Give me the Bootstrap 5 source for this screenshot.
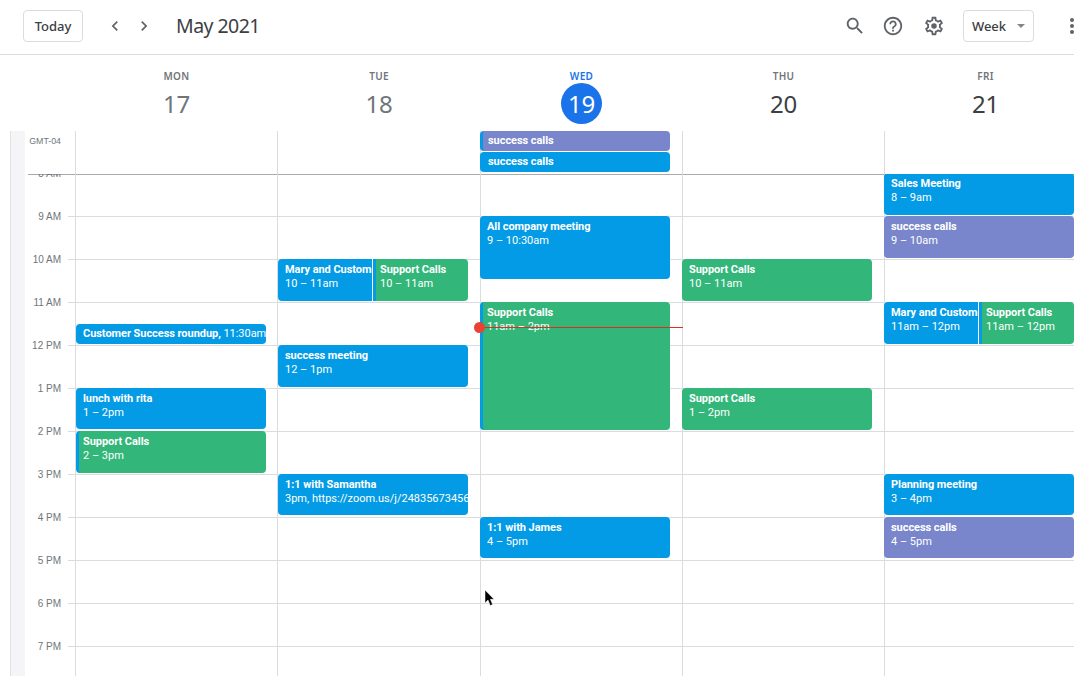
<!DOCTYPE html>
<html lang="en">
<head>
<meta charset="utf-8">
<title>Calendar – May 2021</title>
<link rel="stylesheet" href="https://cdn.jsdelivr.net/npm/bootstrap@5.3.0/dist/css/bootstrap.min.css">
<style>
html,body{height:100%;overflow:hidden;background:#fff}
body{width:1074px;height:676px;font-family:"Liberation Sans",sans-serif;color:#3c4043;position:relative}
.topbar{height:55px;border-bottom:1px solid #dadce0;padding:0 0 2px 23px;white-space:nowrap}
.plain-btn{font:500 13px/1 "Noto Sans",sans-serif;color:#3c4043;height:32px;border:1px solid #dadce0;border-radius:4px;background:#fff;padding:0;display:flex;align-items:center;justify-content:center}
.today-btn{width:60px}
.week-btn{width:71px;margin-left:18px}
.week-btn::after{border-top:4px solid #80868b;border-left:4px solid transparent;border-right:4px solid transparent;border-bottom:0;margin-left:11px;vertical-align:middle}
.chev{fill:#5f6368;display:block}
.chev-left{margin-left:22px}
.chev-right{margin-left:9px}
.month-title{font:400 19.5px/1 "Noto Sans",sans-serif;letter-spacing:-.55px;margin:0 0 0 22px;color:#3c4043}
.tool-icon{fill:#5f6368;display:block}
.icon-search{margin-left:auto}
.icon-help{margin-left:16px}
.icon-gear{margin-left:19px}
.dots{margin-left:36px;display:flex;flex-direction:column;gap:2px;flex:none}
.dots i{display:block;width:4px;height:4px;border-radius:50%;background:#5f6368}
.dayhead-row,.allday-row,.hours-row{display:flex;width:1074px}
.day-cols{display:grid;grid-template-columns:202px 203px 202px 202px 202px;flex:none;width:1011px}
.rail{width:75px;flex:none}
.dayhead-row{height:76px}
.dayhead{text-align:center;padding:15px 0 0 1px}
.dow{font:600 10px/13px "Noto Sans",sans-serif;letter-spacing:.3px;color:#70757a}
.dnum{font:400 24px/41px "Noto Sans",sans-serif;letter-spacing:-.3px;color:#70757a;margin-top:0;height:41px}
.dayhead.future .dnum{color:#3c4043}
.dayhead.now .dow{color:#1a73e8}
.dayhead.now .dnum{width:41px;border-radius:50%;background:#1a73e8;color:#fff;margin:0 auto}
.rail-in{margin-left:10px;background:#f5f5f7;border-left:1px solid #e3e3e6;width:15px;flex:none}
.allday-row{height:43px;position:relative}
.allday-row::after{content:"";position:absolute;left:28px;right:0;bottom:-1px;height:1px;background:#a9a9ad;z-index:0}
.allday-row .rail,.hours-row .rail{display:flex}
.gmt{font:400 8.8px/1 "Liberation Sans",sans-serif;color:#70757a;width:36px;text-align:right;padding-top:6px}
.daycol{border-left:1px solid #dadce0;position:relative;min-width:0}
.allday-col{display:flex;flex-direction:column;gap:1px;padding-right:12px;margin-left:-1px}
.allday-col .ev{position:static;height:20px;margin-left:0;width:190px}
.hours-row{height:502px;overflow:hidden}
.labels{width:50px;flex:none}
.hr-label{height:43px;font:400 10px/1 "Liberation Sans",sans-serif;color:#70757a;text-align:right;padding-right:14px;position:relative}
.hr-label span{display:block;transform:translateY(-5px)}
.hr-label::after{content:"";position:absolute;right:0;bottom:0;width:7px;height:1px;background:#dadce0}
.hr-cell{height:43px;border-bottom:1px solid #dadce0}
.ev{position:absolute;border-radius:4px;color:#fff;font:400 11px/14px Roboto,sans-serif;padding:4px 0 0 7px;overflow:hidden;white-space:nowrap;z-index:1}
.ev b{display:block;font-weight:700;letter-spacing:-.05px;overflow:hidden}
.ev b span{font-weight:400}
.ev-blue{background:#039be5}
.ev-green{background:#33b679}
.ev-purple{background:#7986cb}
.strip{border-left:3px solid #039be5;padding-left:4px}
.split{border-left:1px solid #fff;box-shadow:inset 3px 0 0 #039be5;border-radius:0 4px 4px 0}
.oneline{padding-top:3px}
.allday-col .oneline{padding-left:8px}
.allday-col .strip{padding-left:5px}
.now-line{position:absolute;left:-1px;width:203px;height:1px;background:#d93025;z-index:3}
.now-dot{position:absolute;left:-6px;top:-5px;width:11px;height:11px;border-radius:50%;background:#ea4335}
.pointer{position:absolute;left:484px;top:590px;z-index:5}
</style>
</head>
<body>
<header class="topbar d-flex align-items-center">
  <button type="button" class="plain-btn today-btn">Today</button>
  <svg class="chev chev-left" width="20" height="20" viewBox="0 0 24 24"><path d="M15.41 7.41 14 6l-6 6 6 6 1.41-1.41L10.83 12z"/></svg>
  <svg class="chev chev-right" width="20" height="20" viewBox="0 0 24 24"><path d="M10 6 8.59 7.41 13.17 12l-4.58 4.59L10 18l6-6z"/></svg>
  <h1 class="month-title">May 2021</h1>
  <svg class="tool-icon icon-search" width="22" height="22" viewBox="0 0 24 24"><path d="M15.5 14h-.79l-.28-.27C15.41 12.59 16 11.11 16 9.5 16 5.91 13.09 3 9.5 3S3 5.91 3 9.5 5.91 16 9.5 16c1.61 0 3.09-.59 4.23-1.57l.27.28v.79l5 4.99L20.49 19l-4.99-5zm-6 0C7.01 14 5 11.99 5 9.5S7.01 5 9.5 5 14 7.01 14 9.5 11.99 14 9.5 14z"/></svg>
  <svg class="tool-icon icon-help" width="22" height="22" viewBox="0 0 24 24"><path d="M11 18h2v-2h-2v2zm1-16C6.48 2 2 6.48 2 12s4.48 10 10 10 10-4.48 10-10S17.52 2 12 2zm0 18c-4.41 0-8-3.59-8-8s3.59-8 8-8 8 3.59 8 8-3.59 8-8 8zm0-14c-2.21 0-4 1.79-4 4h2c0-1.1.9-2 2-2s2 .9 2 2c0 2-3 1.75-3 5h2c0-2.25 3-2.5 3-5 0-2.21-1.79-4-4-4z"/></svg>
  <svg class="tool-icon icon-gear" width="22" height="22" viewBox="0 0 24 24"><path d="M19.43 12.98c.04-.32.07-.64.07-.98 0-.34-.03-.66-.07-.98l2.11-1.65c.19-.15.24-.42.12-.64l-2-3.46c-.09-.16-.26-.25-.44-.25-.06 0-.12.01-.17.03l-2.49 1c-.52-.4-1.08-.73-1.69-.98l-.38-2.65C14.46 2.18 14.25 2 14 2h-4c-.25 0-.46.18-.49.42l-.38 2.65c-.61.25-1.17.59-1.69.98l-2.49-1c-.06-.02-.12-.03-.18-.03-.17 0-.34.09-.43.25l-2 3.46c-.13.22-.07.49.12.64l2.11 1.65c-.04.32-.07.65-.07.98 0 .33.03.66.07.98l-2.11 1.65c-.19.15-.24.42-.12.64l2 3.46c.09.16.26.25.44.25.06 0 .12-.01.17-.03l2.49-1c.52.4 1.08.73 1.69.98l.38 2.65c.03.24.24.42.49.42h4c.25 0 .46-.18.49-.42l.38-2.65c.61-.25 1.17-.59 1.69-.98l2.49 1c.06.02.12.03.18.03.17 0 .34-.09.43-.25l2-3.46c.12-.22.07-.49-.12-.64l-2.11-1.65zm-1.98-1.71c.04.31.05.52.05.73 0 .21-.02.43-.05.73l-.14 1.13.89.7 1.08.84-.7 1.21-1.27-.51-1.04-.42-.9.68c-.43.32-.84.56-1.25.73l-1.06.43-.16 1.13-.2 1.35h-1.4l-.19-1.35-.16-1.13-1.06-.43c-.43-.18-.83-.41-1.23-.71l-.91-.7-1.06.43-1.27.51-.7-1.21 1.08-.84.89-.7-.14-1.13c-.03-.31-.05-.54-.05-.74s.02-.43.05-.73l.14-1.13-.89-.7-1.08-.84.7-1.21 1.27.51 1.04.42.9-.68c.43-.32.84-.56 1.25-.73l1.06-.43.16-1.13.2-1.35h1.39l.19 1.35.16 1.13 1.06.43c.43.18.83.41 1.23.71l.91.7 1.06-.43 1.27-.51.7 1.21-1.07.85-.89.7.14 1.13z"/><circle cx="12" cy="12" r="3"/></svg>
  <button type="button" class="plain-btn week-btn dropdown-toggle">Week</button>
  <span class="dots"><i></i><i></i><i></i></span>
</header>

<section class="dayhead-row">
  <div class="rail"></div>
  <div class="day-cols">
    <div class="dayhead"><div class="dow">MON</div><div class="dnum">17</div></div>
    <div class="dayhead"><div class="dow">TUE</div><div class="dnum">18</div></div>
    <div class="dayhead now"><div class="dow">WED</div><div class="dnum">19</div></div>
    <div class="dayhead future"><div class="dow">THU</div><div class="dnum">20</div></div>
    <div class="dayhead future"><div class="dow">FRI</div><div class="dnum">21</div></div>
  </div>
</section>

<section class="allday-row">
  <div class="rail"><div class="rail-in"></div><div class="gmt">GMT-04</div></div>
  <div class="day-cols">
    <div class="daycol"></div>
    <div class="daycol"></div>
    <div class="daycol">
      <div class="allday-col">
        <div class="ev ev-purple strip oneline"><b>success calls</b></div>
        <div class="ev ev-blue oneline"><b>success calls</b></div>
      </div>
    </div>
    <div class="daycol"></div>
    <div class="daycol"></div>
  </div>
</section>

<section class="hours-row">
  <div class="rail">
    <div class="rail-in"></div>
    <div class="labels">
      <div class="hr-label"><span>8 AM</span></div>
      <div class="hr-label"><span>9 AM</span></div>
      <div class="hr-label"><span>10 AM</span></div>
      <div class="hr-label"><span>11 AM</span></div>
      <div class="hr-label"><span>12 PM</span></div>
      <div class="hr-label"><span>1 PM</span></div>
      <div class="hr-label"><span>2 PM</span></div>
      <div class="hr-label"><span>3 PM</span></div>
      <div class="hr-label"><span>4 PM</span></div>
      <div class="hr-label"><span>5 PM</span></div>
      <div class="hr-label"><span>6 PM</span></div>
      <div class="hr-label"><span>7 PM</span></div>
    </div>
  </div>
  <div class="day-cols">
    <div class="daycol">
      <div class="hr-cell"></div><div class="hr-cell"></div><div class="hr-cell"></div><div class="hr-cell"></div><div class="hr-cell"></div><div class="hr-cell"></div><div class="hr-cell"></div><div class="hr-cell"></div><div class="hr-cell"></div><div class="hr-cell"></div><div class="hr-cell"></div><div class="hr-cell"></div>
      <div class="ev ev-blue oneline" style="top:150px;height:20px;left:0;width:190px"><b>Customer Success roundup, <span>11:30am</span></b></div>
      <div class="ev ev-blue" style="top:214px;height:41px;left:0;width:190px"><b>lunch with rita</b>1 – 2pm</div>
      <div class="ev ev-green strip" style="top:257px;height:42px;left:0;width:190px"><b>Support Calls</b>2 – 3pm</div>
    </div>
    <div class="daycol">
      <div class="hr-cell"></div><div class="hr-cell"></div><div class="hr-cell"></div><div class="hr-cell"></div><div class="hr-cell"></div><div class="hr-cell"></div><div class="hr-cell"></div><div class="hr-cell"></div><div class="hr-cell"></div><div class="hr-cell"></div><div class="hr-cell"></div><div class="hr-cell"></div>
      <div class="ev ev-blue" style="top:85px;height:42px;left:0;width:98px"><b>Mary and Customer</b>10 – 11am</div>
      <div class="ev ev-green split" style="top:85px;height:42px;left:94px;width:96px"><b>Support Calls</b>10 – 11am</div>
      <div class="ev ev-blue" style="top:171px;height:42px;left:0;width:190px"><b>success meeting</b>12 – 1pm</div>
      <div class="ev ev-blue" style="top:300px;height:41px;left:0;width:190px"><b>1:1 with Samantha</b>3pm, https://zoom.us/j/24835673456</div>
    </div>
    <div class="daycol">
      <div class="hr-cell"></div><div class="hr-cell"></div><div class="hr-cell"></div><div class="hr-cell"></div><div class="hr-cell"></div><div class="hr-cell"></div><div class="hr-cell"></div><div class="hr-cell"></div><div class="hr-cell"></div><div class="hr-cell"></div><div class="hr-cell"></div><div class="hr-cell"></div>
      <div class="ev ev-blue" style="top:42px;height:63px;left:-1px;width:190px"><b>All company meeting</b>9 – 10:30am</div>
      <div class="ev ev-green strip" style="top:128px;height:128px;left:-1px;width:190px"><b>Support Calls</b>11am – 2pm</div>
      <div class="ev ev-blue" style="top:343px;height:41px;left:-1px;width:190px"><b>1:1 with James</b>4 – 5pm</div>
      <div class="now-line" style="top:153px"><div class="now-dot"></div></div>
    </div>
    <div class="daycol">
      <div class="hr-cell"></div><div class="hr-cell"></div><div class="hr-cell"></div><div class="hr-cell"></div><div class="hr-cell"></div><div class="hr-cell"></div><div class="hr-cell"></div><div class="hr-cell"></div><div class="hr-cell"></div><div class="hr-cell"></div><div class="hr-cell"></div><div class="hr-cell"></div>
      <div class="ev ev-green" style="top:85px;height:42px;left:-1px;width:190px"><b>Support Calls</b>10 – 11am</div>
      <div class="ev ev-green" style="top:214px;height:42px;left:-1px;width:190px"><b>Support Calls</b>1 – 2pm</div>
    </div>
    <div class="daycol">
      <div class="hr-cell"></div><div class="hr-cell"></div><div class="hr-cell"></div><div class="hr-cell"></div><div class="hr-cell"></div><div class="hr-cell"></div><div class="hr-cell"></div><div class="hr-cell"></div><div class="hr-cell"></div><div class="hr-cell"></div><div class="hr-cell"></div><div class="hr-cell"></div>
      <div class="ev ev-blue" style="top:-1px;height:42px;left:-1px;width:190px"><b>Sales Meeting</b>8 – 9am</div>
      <div class="ev ev-purple" style="top:42px;height:42px;left:-1px;width:190px"><b>success calls</b>9 – 10am</div>
      <div class="ev ev-blue" style="top:128px;height:42px;left:-1px;width:99px"><b>Mary and Customer</b>11am – 12pm</div>
      <div class="ev ev-green split" style="top:128px;height:42px;left:93px;width:96px"><b>Support Calls</b>11am – 12pm</div>
      <div class="ev ev-blue" style="top:300px;height:41px;left:-1px;width:190px"><b>Planning meeting</b>3 – 4pm</div>
      <div class="ev ev-purple" style="top:343px;height:41px;left:-1px;width:190px"><b>success calls</b>4 – 5pm</div>
    </div>
  </div>
</section>

<svg class="pointer" width="12" height="18" viewBox="0 0 12 18"><path d="M1 0v13l3-3 2.2 5.5 2.4-1-2.2-5.2H10z" fill="#000" stroke="#fff" stroke-width=".5"/></svg>
<script src="https://cdn.jsdelivr.net/npm/bootstrap@5.3.0/dist/js/bootstrap.bundle.min.js"></script>
</body>
</html>
